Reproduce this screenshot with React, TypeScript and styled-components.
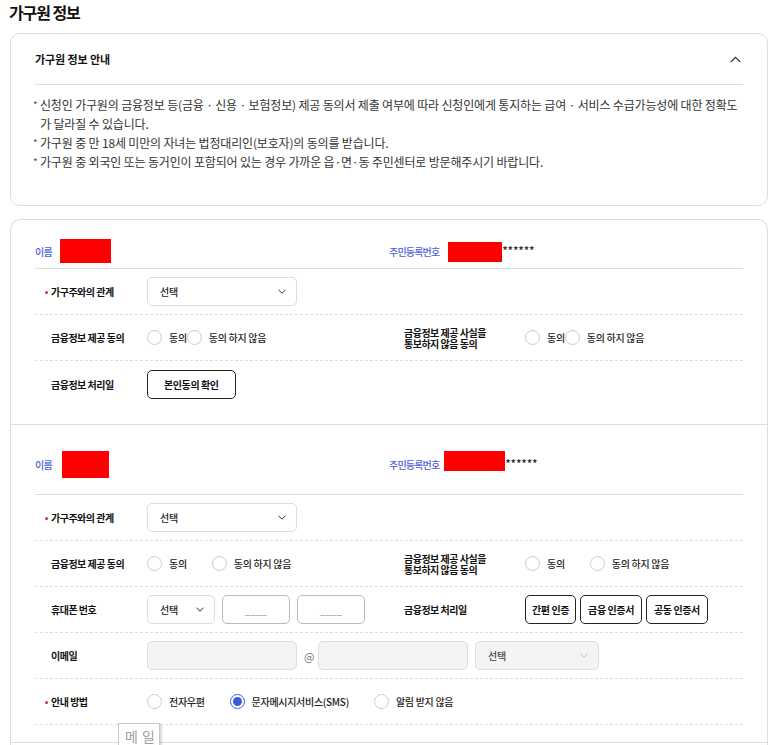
import React from "react"
import styled, { createGlobalStyle } from "styled-components"

const GlobalStyle = createGlobalStyle`
  * { box-sizing: border-box; }
  body {
    margin: 0;
    background: #fff;
    color: #222;
    font-family: "Noto Sans CJK KR", "Noto Sans", sans-serif;
  }
`

const Page = styled.div`
  width: 780px;
  padding: 2px 12px 0 10px;
`

const Title = styled.h2`
  margin: 0 0 10px -1px;
  font-size: 16px;
  line-height: 21px;
  font-weight: 700;
  letter-spacing: -1.1px;
  color: #111;
`

const InfoCard = styled.section`
  border: 1px solid #ddd;
  border-radius: 10px;
  padding: 0 24px 34px;
`

const InfoHeader = styled.div`
  display: flex;
  align-items: center;
  justify-content: space-between;
  height: 51px;
  border-bottom: 1px solid #ddd;
`

const InfoHeading = styled.h3`
  margin: 0;
  font-size: 11px;
  font-weight: 700;
  letter-spacing: -0.1px;
  color: #111;
`

const ToggleIcon = styled.svg`
  margin-right: 2px;
`

const BulletList = styled.ul`
  margin: 10px 0 0;
  padding: 0;
  list-style: none;
`

const BulletItem = styled.li`
  display: flex;
  font-size: 12px;
  line-height: 19px;
  letter-spacing: -0.17px;
  color: #333;
`

const Marker = styled.span`
  flex-shrink: 0;
  width: 7px;
  margin-left: -2px;
  font-size: 10px;
  color: #555;
`

const MainCard = styled.section`
  margin-top: 13px;
  border: 1px solid #ddd;
  border-bottom: none;
  border-radius: 10px 10px 0 0;
  padding-bottom: 30px;
`

const Member = styled.div<{ $pt: number }>`
  position: relative;
  padding: ${(p) => p.$pt}px 24px 17px;
  border-bottom: 1px solid #ddd;
`

const NameRow = styled.div<{ $pb: number }>`
  display: grid;
  grid-template-columns: 1fr 1fr;
  align-items: center;
  min-height: ${(p) => 29 + p.$pb}px;
  padding-bottom: ${(p) => p.$pb}px;
  border-bottom: 1px solid #ddd;
`

const NameCell = styled.div`
  display: flex;
  align-items: center;
`

const BlueLabel = styled.span`
  font-size: 10px;
  font-weight: 500;
  letter-spacing: -0.8px;
  color: #4d62d8;
`

const Redact = styled.span<{ $w: number; $h: number; $ml: number; $dy?: number }>`
  display: inline-block;
  width: ${(p) => p.$w}px;
  height: ${(p) => p.$h}px;
  margin-left: ${(p) => p.$ml}px;
  margin-top: ${(p) => (p.$dy ?? 0) * 2}px;
  background: #ff0000;
`

const Masked = styled.span`
  font-size: 10px;
  font-weight: 700;
  color: #333;
  letter-spacing: 0.3px;
  margin-top: -4px;
`

const FieldRow = styled.div`
  display: grid;
  grid-template-columns: 1fr 1fr;
  height: 46px;
  border-bottom: 1px dashed #ddd;

  &:last-child {
    border-bottom: none;
  }
`

const Cell = styled.div<{ $full?: boolean }>`
  display: flex;
  align-items: center;
  gap: 7px;
  grid-column: ${(p) => (p.$full ? "1 / -1" : "auto")};
`

const Label = styled.div<{ $wide?: boolean }>`
  flex-shrink: 0;
  width: ${(p) => (p.$wide ? 129 : 105)}px;
  padding-left: ${(p) => (p.$wide ? 15 : 16)}px;
  font-size: 10px;
  font-weight: 700;
  line-height: 11px;
  letter-spacing: -0.5px;
  color: #111;
`

const RequiredDot = styled.span`
  display: inline-block;
  width: 3px;
  height: 3px;
  margin: 0 3px 2px -6px;
  border-radius: 50%;
  background: #d63030;
  vertical-align: middle;
`

const SelectBox = styled.div<{ $w: number; $disabled?: boolean }>`
  display: flex;
  align-items: center;
  justify-content: space-between;
  width: ${(p) => p.$w}px;
  height: 29px;
  padding: 0 10px 0 12px;
  border: 1px solid #ddd;
  border-radius: 5px;
  background: ${(p) => (p.$disabled ? "#f4f4f4" : "#fff")};
  font-size: 10px;
  font-weight: 500;
  letter-spacing: -0.3px;
  color: ${(p) => (p.$disabled ? "#444" : "#222")};
`

const OutlineButton = styled.button<{ $px: number }>`
  height: 29px;
  padding: 0 ${(p) => p.$px}px;
  border: 1px solid #222;
  border-radius: 5px;
  background: #fff;
  font-family: inherit;
  font-size: 10px;
  font-weight: 700;
  letter-spacing: -0.4px;
  color: #111;
  cursor: pointer;
`

const ButtonGroup = styled.div`
  display: flex;
  gap: 4px;
`

const TextInput = styled.input<{ $w: number; $disabled?: boolean }>`
  width: ${(p) => p.$w}px;
  height: 29px;
  padding: 0 8px;
  border: 1px solid ${(p) => (p.$disabled ? "#ddd" : "#bbb")};
  border-radius: 5px;
  background: ${(p) => (p.$disabled ? "#f4f4f4" : "#fff")};
  font-family: inherit;
  font-size: 10px;
  text-align: center;
  outline: none;

  &::placeholder {
    color: #999;
  }
`

const AtSign = styled.span`
  width: 7px;
  text-align: center;
  font-size: 11px;
  color: #777;
`

const RadioGroup = styled.div<{ $gap: number }>`
  display: flex;
  align-items: center;
  gap: ${(p) => p.$gap}px;
`

const RadioItem = styled.label`
  display: flex;
  align-items: center;
  gap: 7px;
  font-size: 10px;
  font-weight: 500;
  letter-spacing: -0.3px;
  color: #222;
`

const RadioCircle = styled.span<{ $checked?: boolean }>`
  display: flex;
  align-items: center;
  justify-content: center;
  width: 15px;
  height: 15px;
  border-radius: 50%;
  border: 1px solid ${(p) => (p.$checked ? "#3b5bdb" : "#ccc")};
  background: #fff;

  &::after {
    content: "";
    display: ${(p) => (p.$checked ? "block" : "none")};
    width: 9px;
    height: 9px;
    border-radius: 50%;
    background: #3b5bdb;
  }
`

const InputHint = styled.div`
  position: absolute;
  left: 107px;
  top: 298px;
  width: 42px;
  height: 28px;
  padding-left: 6px;
  border: 1px solid #c8c8c8;
  background: #fff;
  box-shadow: 2px 1px 2px rgba(0, 0, 0, 0.15);
  font-size: 14px;
  line-height: 24px;
  letter-spacing: 4px;
  color: #a0a0a0;
`

const Chevron = ({ color = "#333" }: { color?: string }) => (
  <svg width="8" height="5" viewBox="0 0 8 5" fill="none">
    <path d="M0.5 0.8 L4 4.2 L7.5 0.8" stroke={color} strokeWidth="1" />
  </svg>
)

const Radios = ({
  options,
  checked,
  gap,
}: {
  options: string[]
  checked?: string
  gap: number
}) => (
  <RadioGroup $gap={gap}>
    {options.map((o) => (
      <RadioItem key={o}>
        <RadioCircle $checked={checked === o} />
        {o}
      </RadioItem>
    ))}
  </RadioGroup>
)

const notices = [
  <>
    신청인 가구원의 금융정보 등(금융 · 신용 · 보험정보) 제공 동의서 제출 여부에 따라 신청인에게 통지하는 급여 · 서비스 수급가능성에 대한 정확도
    <br />가 달라질 수 있습니다.
  </>,
  <>가구원 중 만 18세 미만의 자녀는 법정대리인(보호자)의 동의를 받습니다.</>,
  <>가구원 중 외국인 또는 동거인이 포함되어 있는 경우 가까운 읍·면·동 주민센터로 방문해주시기 바랍니다.</>,
]

const consentOptions = ["동의", "동의 하지 않음"]

const RelationRow = () => (
  <FieldRow>
    <Cell>
      <Label>
        <RequiredDot />
        가구주와의 관계
      </Label>
      <SelectBox $w={150}>
        선택
        <Chevron />
      </SelectBox>
    </Cell>
  </FieldRow>
)

const ConsentRow = ({ gap }: { gap: number }) => (
  <FieldRow>
    <Cell>
      <Label>금융정보 제공 동의</Label>
      <Radios options={consentOptions} gap={gap} />
    </Cell>
    <Cell>
      <Label $wide>
        금융정보 제공 사실을
        <br />
        통보하지 않음 동의
      </Label>
      <Radios options={consentOptions} gap={gap} />
    </Cell>
  </FieldRow>
)

export default function App() {
  return (
    <>
      <GlobalStyle />
      <Page>
        <Title>가구원 정보</Title>

        <InfoCard>
          <InfoHeader>
            <InfoHeading>가구원 정보 안내</InfoHeading>
            <ToggleIcon width="11" height="7" viewBox="0 0 11 7" fill="none">
              <path d="M0.8 6 L5.5 1.3 L10.2 6" stroke="#333" strokeWidth="1.1" />
            </ToggleIcon>
          </InfoHeader>
          <BulletList>
            {notices.map((n, i) => (
              <BulletItem key={i}>
                <Marker>*</Marker>
                <span>{n}</span>
              </BulletItem>
            ))}
          </BulletList>
        </InfoCard>

        <MainCard>
          <Member $pt={17}>
            <NameRow $pb={3}>
              <NameCell>
                <BlueLabel>이름</BlueLabel>
                <Redact $w={51} $h={24} $ml={8} />
              </NameCell>
              <NameCell>
                <BlueLabel>주민등록번호</BlueLabel>
                <Redact $w={54} $h={20} $ml={9} $dy={1} />
                <Masked>******</Masked>
              </NameCell>
            </NameRow>
            <RelationRow />
            <ConsentRow gap={0} />
            <FieldRow>
              <Cell>
                <Label>금융정보 처리일</Label>
                <OutlineButton $px={16}>본인동의 확인</OutlineButton>
              </Cell>
            </FieldRow>
          </Member>

          <Member $pt={25}>
            <NameRow $pb={16}>
              <NameCell>
                <BlueLabel>이름</BlueLabel>
                <Redact $w={47} $h={27} $ml={10} />
              </NameCell>
              <NameCell>
                <BlueLabel>주민등록번호</BlueLabel>
                <Redact $w={61} $h={20} $ml={5} $dy={-3} />
                <Masked>******</Masked>
              </NameCell>
            </NameRow>
            <RelationRow />
            <ConsentRow gap={25} />
            <FieldRow>
              <Cell>
                <Label>휴대폰 번호</Label>
                <SelectBox $w={68}>
                  선택
                  <Chevron />
                </SelectBox>
                <TextInput $w={68} placeholder="____" readOnly />
                <TextInput $w={68} placeholder="____" readOnly />
              </Cell>
              <Cell>
                <Label $wide>금융정보 처리일</Label>
                <ButtonGroup>
                  <OutlineButton $px={6}>간편 인증</OutlineButton>
                  <OutlineButton $px={7}>금융 인증서</OutlineButton>
                  <OutlineButton $px={7}>공동 인증서</OutlineButton>
                </ButtonGroup>
              </Cell>
            </FieldRow>
            <FieldRow>
              <Cell $full>
                <Label>이메일</Label>
                <TextInput $w={150} $disabled disabled />
                <AtSign>@</AtSign>
                <TextInput $w={150} $disabled disabled />
                <SelectBox $w={124} $disabled>
                  선택
                  <Chevron color="#bbb" />
                </SelectBox>
              </Cell>
            </FieldRow>
            <FieldRow>
              <Cell $full>
                <Label>
                  <RequiredDot />
                  안내 방법
                </Label>
                <Radios
                  options={["전자우편", "문자메시지서비스(SMS)", "알림 받지 않음"]}
                  checked="문자메시지서비스(SMS)"
                  gap={25}
                />
              </Cell>
            </FieldRow>
            <InputHint>메일</InputHint>
          </Member>
        </MainCard>
      </Page>
    </>
  )
}
